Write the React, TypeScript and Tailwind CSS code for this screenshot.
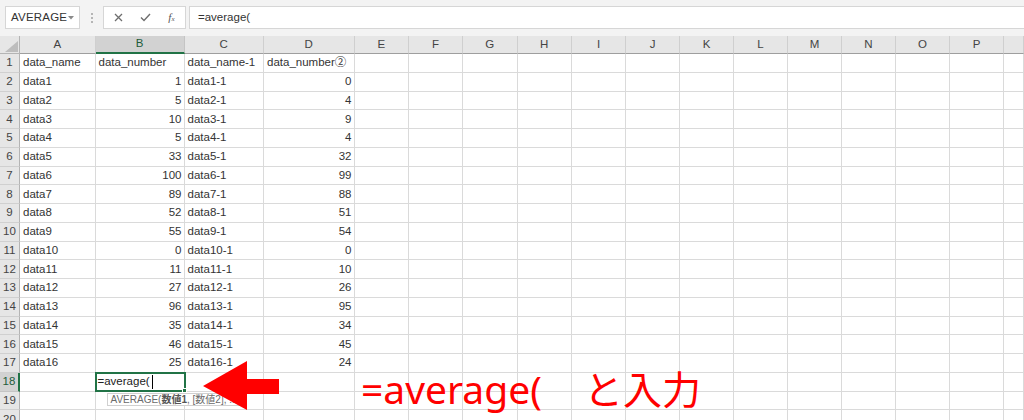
import React from 'react';

// Sheet columns: widths follow the gridlines in the screenshot
const columns = [
  { label: 'A', w: 'w-[75.5px]' },
  { label: 'B', w: 'w-[89px]' },
  { label: 'C', w: 'w-[79.5px]' },
  { label: 'D', w: 'w-[90.5px]' },
  { label: 'E', w: 'w-[54.5px]' },
  { label: 'F', w: 'w-[54px]' },
  { label: 'G', w: 'w-[54.5px]' },
  { label: 'H', w: 'w-[54.5px]' },
  { label: 'I', w: 'w-[54px]' },
  { label: 'J', w: 'w-[54px]' },
  { label: 'K', w: 'w-[54px]' },
  { label: 'L', w: 'w-[54px]' },
  { label: 'M', w: 'w-[54px]' },
  { label: 'N', w: 'w-[54px]' },
  { label: 'O', w: 'w-[54px]' },
  { label: 'P', w: 'w-[54px]' },
  { label: '', w: 'flex-1' }
];

const numbers = [1, 5, 10, 5, 33, 100, 89, 52, 55, 0, 11, 27, 96, 35, 46, 25];
const numbers2 = [0, 4, 9, 4, 32, 99, 88, 51, 54, 0, 10, 26, 95, 34, 45, 24];

const rows: (string | number)[][] = [
  ['data_name', 'data_number', 'data_name-1', 'data_number②'],
  ...numbers.map((n, i) => [`data${i + 1}`, n, `data${i + 1}-1`, numbers2[i]]),
  [],
  [],
  []
];

const font = { fontFamily: '"Liberation Sans", "Noto Sans CJK JP", sans-serif' };

const Toolbar = () => (
  <div className="h-[36px] bg-[#f3f3f3] flex items-start pt-[6px] text-[#333]">
    {/* Name box */}
    <div className="ml-[5px] w-[75px] h-[23px] bg-white border border-[#d6d6d6] flex items-center pl-[5px] pr-[5px] text-[11.5px] tracking-[0.2px]">
      <span className="flex-1">AVERAGE</span>
      <svg width="6" height="4" viewBox="0 0 6 4">
        <path d="M0 0 L6 0 L3 3.5 Z" fill="#8a8a8a" />
      </svg>
    </div>
    {/* Grip dots */}
    <div className="w-[23px] h-[23px] flex flex-col items-center justify-center gap-[2px]">
      <span className="w-[2px] h-[2px] bg-[#b5b5b5]" />
      <span className="w-[2px] h-[2px] bg-[#b5b5b5]" />
      <span className="w-[2px] h-[2px] bg-[#b5b5b5]" />
    </div>
    {/* Cancel / Enter / fx */}
    <div className="w-[83px] h-[23px] bg-white border border-[#d6d6d6] flex items-center justify-around px-[2px]">
      <svg width="9" height="9" viewBox="0 0 9 9">
        <path d="M1 1 L8 8 M8 1 L1 8" stroke="#6e6e6e" strokeWidth="1.3" />
      </svg>
      <svg width="11" height="9" viewBox="0 0 11 9">
        <path d="M1 4.5 L4 7.5 L10 1" stroke="#6e6e6e" strokeWidth="1.4" fill="none" />
      </svg>
      <span className="italic text-[11px] text-[#555] leading-none" style={{ fontFamily: '"Liberation Serif", serif' }}>
        f<span className="text-[7px]">x</span>
      </span>
    </div>
    {/* Formula input */}
    <div className="ml-[3px] flex-1 h-[23px] bg-white border border-[#d6d6d6] border-r-0 flex items-center pl-[8px] text-[11.5px]">
      =average(
    </div>
  </div>
);

const HeaderRow = () => (
  <div className="flex h-[18px] text-[11.5px] text-[#444]">
    <div className="w-[20px] shrink-0 bg-[#e6e6e6] border-r border-b border-[#b4b4b4] flex items-end justify-end p-[1px]">
      <svg width="13" height="11" viewBox="0 0 13 11">
        <path d="M13 0 L13 11 L0 11 Z" fill="#bdbdbd" />
      </svg>
    </div>
    {columns.map((c) =>
      c.label === 'B' ? (
        <div
          key={c.label}
          className={`${c.w} shrink-0 bg-[#d2d2d2] border-r border-[#c4c4c4] border-b-2 border-b-[#217346] flex items-center justify-center text-[#1e5c3a]`}
        >
          {c.label}
        </div>
      ) : (
        <div
          key={c.label || 'q'}
          className={`${c.w} shrink-0 bg-[#e6e6e6] border-r border-[#cfcfcf] border-b border-b-[#9e9e9e] flex items-center justify-center`}
        >
          {c.label}
        </div>
      )
    )}
  </div>
);

const ActiveCell = () => (
  <div className="absolute -left-[1px] -top-[1px] w-[91px] h-[20.5px] border-2 border-[#217346] flex items-center pl-[1px] text-[11.5px] text-[#222] z-10">
    <span>=average(</span>
    <span className="w-[1px] h-[14px] bg-black ml-[2px]" />
    <span className="absolute -right-[3px] -bottom-[3px] w-[5px] h-[5px] bg-[#217346] border border-white" />
    {/* Function hint */}
    <div className="absolute left-[10px] top-[19px] h-[13px] bg-white border border-[#d0d0d0] px-[3px] flex items-center text-[10px] text-[#6a6a6a] whitespace-nowrap">
      AVERAGE(<b className="font-bold text-[#555]">数値1</b>, [数値2], ...)
    </div>
  </div>
);

const SheetRow = ({ index, cells }: { index: number; cells: (string | number)[] }) => {
  const selected = index === 18;
  return (
    <div className="flex h-[18.75px] text-[11.5px] text-[#333]">
      <div
        className={
          selected
            ? 'w-[20px] shrink-0 bg-[#d2d2d2] border-b border-[#c4c4c4] border-r-2 border-r-[#217346] flex items-center justify-center text-[#1e5c3a]'
            : 'w-[20px] shrink-0 bg-[#e6e6e6] border-b border-[#d0d0d0] border-r border-r-[#b4b4b4] flex items-center justify-center text-[#444]'
        }
      >
        {index}
      </div>
      {columns.map((c, ci) => {
        const value = cells[ci];
        const right = typeof value === 'number';
        return (
          <div
            key={c.label || 'q'}
            className={`${c.w} shrink-0 relative border-r border-b border-[#dadada] flex items-center whitespace-nowrap ${
              right ? 'justify-end pr-[2px]' : 'pl-[3px]'
            }`}
          >
            {value}
            {selected && c.label === 'B' && <ActiveCell />}
          </div>
        );
      })}
    </div>
  );
};

export default function App() {
  return (
    <div className="w-[1024px] h-[420px] overflow-hidden bg-white" style={font}>
      <Toolbar />
      <div className="relative">
        <HeaderRow />
        {rows.map((cells, i) => (
          <SheetRow key={i} index={i + 1} cells={cells} />
        ))}

        {/* Annotation: red arrow */}
        <svg className="absolute left-[200px] top-[322px] z-20" width="82" height="56" viewBox="0 0 82 56">
          <polygon points="3,28 47,3 47,21 79,21 79,36 47,36 47,52" fill="#ff0000" />
        </svg>

        {/* Annotation: caption */}
        <div
          className="absolute left-[361px] top-[333px] text-[39px] leading-none text-[#ff0000] whitespace-nowrap z-20"
          style={{ fontFamily: '"Noto Sans", "Noto Sans CJK JP", sans-serif' }}
        >
          =average(<span className="inline-block w-[42px]" />と入力
        </div>
      </div>
    </div>
  );
}
